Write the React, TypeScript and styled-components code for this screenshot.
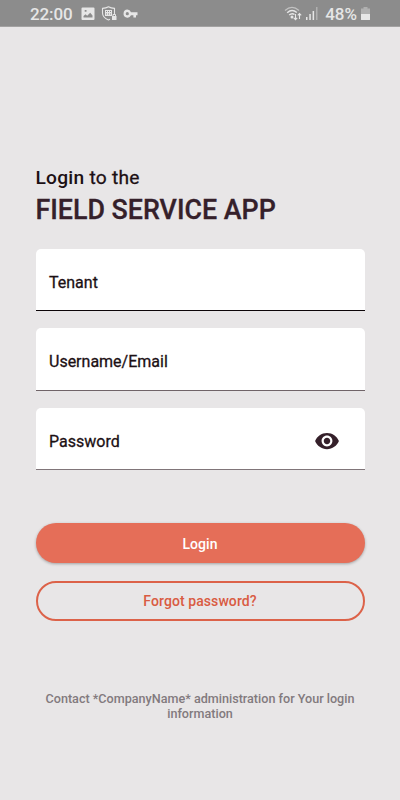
import React from "react";
import styled, { createGlobalStyle } from "styled-components";

const GlobalStyle = createGlobalStyle`
  * { box-sizing: border-box; }
  body { margin: 0; background: #e8e6e7; font-family: Roboto, sans-serif; }
  button { font-family: inherit; }
`;

const Screen = styled.div`
  display: flex;
  flex-direction: column;
  height: 800px;
  background: #e8e6e7;
`;

const StatusBar = styled.header`
  display: flex;
  align-items: center;
  justify-content: space-between;
  height: 27px;
  padding: 1px 30px 0 30px;
  background: #8c8c8c;
  border-bottom: 1px solid #a3a2a2;
  color: #e6e6e6;
  font-size: 17px;
  font-weight: 500;
  line-height: 26px;
`;

const StatusGroup = styled.div`
  display: flex;
  align-items: center;
  svg { display: block; }
`;

const Clock = styled.span`
  width: 51px;
  letter-spacing: -0.1px;
  white-space: nowrap;
`;

const Battery = styled.span`
  margin: 0 4px 0 7px;
`;

const Main = styled.main`
  display: flex;
  flex-direction: column;
  padding: 139px 35.5px 0 35.5px;
`;

const Intro = styled.div`
  color: #1c1014;
  font-size: 19.2px;
  font-weight: 400;
  line-height: 24px;
  letter-spacing: 0.24px;
  -webkit-text-stroke: 0.3px;
  strong { font-weight: 500; -webkit-text-stroke: 0; }
`;

const Title = styled.h1`
  margin: 4px 0 0;
  color: #35202a;
  font-size: 26.8px;
  font-weight: 500;
  line-height: 32px;
  -webkit-text-stroke: 0.3px;
  white-space: nowrap;
`;

const Fields = styled.div`
  display: flex;
  flex-direction: column;
  gap: 17px;
  margin-top: 22.5px;
`;

const Field = styled.label<{ $line: string }>`
  display: flex;
  align-items: center;
  justify-content: space-between;
  height: 62.5px;
  padding: 6px 24.5px 0 13.5px;
  background: #fff;
  border-bottom: 1px solid ${(p) => p.$line};
  border-radius: 5px 5px 0 0;
  color: #1c1014;
  font-size: 16px;
  font-weight: 400;
  -webkit-text-stroke: 0.3px;
  svg { display: block; margin-top: -1px; }
`;

const Actions = styled.div`
  display: flex;
  flex-direction: column;
  gap: 18px;
  margin-top: 53px;
`;

const Button = styled.button<{ $outlined?: boolean }>`
  height: 40px;
  padding: ${(p) => (p.$outlined ? "0" : "1px 0 0")};
  border: ${(p) => (p.$outlined ? "2px solid #dc6249" : "0")};
  border-radius: 20px;
  background: ${(p) => (p.$outlined ? "transparent" : "#e56e58")};
  box-shadow: ${(p) => (p.$outlined ? "none" : "0 1px 3px rgba(0, 0, 0, 0.3)")};
  color: ${(p) => (p.$outlined ? "#d95b42" : "#fff")};
  font-size: 14px;
  font-weight: 500;
  letter-spacing: 0.08px;
  line-height: 20px;
`;

const Note = styled.p`
  margin: 70px 0 0;
  color: #827a7e;
  font-size: 12.6px;
  font-weight: 500;
  line-height: 15px;
  text-align: center;
`;

const ImageIcon = () => (
  <svg width="14" height="14" viewBox="0 0 14 14">
    <path fill="currentColor" fillRule="evenodd" d="M1.5 0.5h11q1 0 1 1v10.5q0 1-1 1h-11q-1 0-1-1V1.500q0-1 1-1zM2.500 10.500h9V8.500L9.200 5.800 6.200 8.800 4.500 7.200 2.500 9zM3.700 3v1.800h1.800V3z" />
  </svg>
);

const ShieldIcon = () => (
  <svg width="16" height="15" viewBox="0 0 16 15">
    <path fill="none" stroke="currentColor" strokeWidth="1.100" d="M9 13.300L7.500 14Q1.500 11.500 1.500 7V2.400Q5 2.200 7.500.8 10 2.200 13.500 2.400V8" />
    <path fill="currentColor" fillRule="evenodd" d="M4 4h7v6H4zM5 5v1h1V5zM7 5v1h1V5zM9 5v1h1V5zM5 7.500v1h1v-1zM7 7.500v1h1v-1zM9 7.500v1h1v-1z" />
    <rect x="11" y="10" width="4.500" height="4" fill="currentColor" />
    <path fill="none" stroke="currentColor" d="M12 10V8.500h2.500V10" />
  </svg>
);

const KeyIcon = () => (
  <svg width="15" height="10" viewBox="0 0 15 10">
    <path fill="currentColor" fillRule="evenodd" d="M4.300.600A3.900 4 0 0 1 8 3.200h6.500v3H13V8.500h-2.600V6.200H8A3.900 4 0 1 1 4.300.600zM4.300 3.100a1.600 1.600 0 1 0 0 3.200 1.600 1.600 0 0 0 0-3.200z" />
  </svg>
);

const WifiIcon = () => (
  <svg width="19" height="15" viewBox="0 0 19 15" fill="none" stroke="currentColor">
    <path opacity=".6" strokeWidth="1.300" d="M1 4.500Q8 -1.800 15 4.500" />
    <path strokeWidth="1.500" d="M3.200 6.700Q8 2.500 12.800 6.500M5.200 9Q8 6.600 10.500 8.500" />
    <circle cx="8" cy="11" r="1.500" fill="currentColor" stroke="none" />
    <path strokeWidth="1.100" d="M11.500 8v5.500M9.800 11.800l1.700 1.900 1.700-1.900M15.500 13V7.500M13.800 9.400l1.700-1.900 1.700 1.900" />
  </svg>
);

const SignalIcon = () => (
  <svg width="12" height="13" viewBox="0 0 12 13" fill="currentColor">
    <path d="M0 10h1.500v3H0zM3.300 7h1.500v6H3.300zM6.600 4h1.500v9H6.600z" />
    <path opacity=".4" d="M10 0h1.500v13H10z" />
  </svg>
);

const BatteryIcon = () => (
  <svg width="9" height="14" viewBox="0 0 9 14" fill="currentColor">
    <path opacity=".4" d="M2.500 0h4v1.500H9V7H0V1.500h2.500z" />
    <path d="M0 7h9v5.500q0 .5-.5.5h-8Q0 13 0 12.500z" />
  </svg>
);

const EyeIcon = () => (
  <svg width="26" height="26" viewBox="0 0 24 24" fill="#35202a">
    <path d="M12 4.500C7 4.500 2.730 7.610 1 12c1.730 4.390 6 7.500 11 7.500s9.270-3.110 11-7.500c-1.730-4.390-6-7.500-11-7.500zM12 17c-2.760 0-5-2.240-5-5s2.240-5 5-5 5 2.240 5 5-2.240 5-5 5zm0-8c-1.660 0-3 1.340-3 3s1.340 3 3 3 3-1.340 3-3-1.340-3-3-3z" />
  </svg>
);

const LeftIcons = styled(StatusGroup)`
  gap: 6px;
`;

const Radios = styled(StatusGroup)`
  gap: 3px;
`;

export default function App() {
  return (
    <Screen>
      <GlobalStyle />
      <StatusBar>
        <StatusGroup>
          <Clock>22:00</Clock>
          <LeftIcons>
            <ImageIcon />
            <ShieldIcon />
            <KeyIcon />
          </LeftIcons>
        </StatusGroup>
        <StatusGroup>
          <Radios>
            <WifiIcon />
            <SignalIcon />
          </Radios>
          <Battery>48%</Battery>
          <BatteryIcon />
        </StatusGroup>
      </StatusBar>
      <Main>
        <Intro><strong>Login</strong> to the</Intro>
        <Title>FIELD SERVICE APP</Title>
        <Fields>
          <Field $line="#0c0508">Tenant</Field>
          <Field $line="#706468">Username/Email</Field>
          <Field $line="#807579">Password<EyeIcon /></Field>
        </Fields>
        <Actions>
          <Button>Login</Button>
          <Button $outlined>Forgot password?</Button>
        </Actions>
        <Note>Contact *CompanyName* administration for Your login information</Note>
      </Main>
    </Screen>
  );
}
